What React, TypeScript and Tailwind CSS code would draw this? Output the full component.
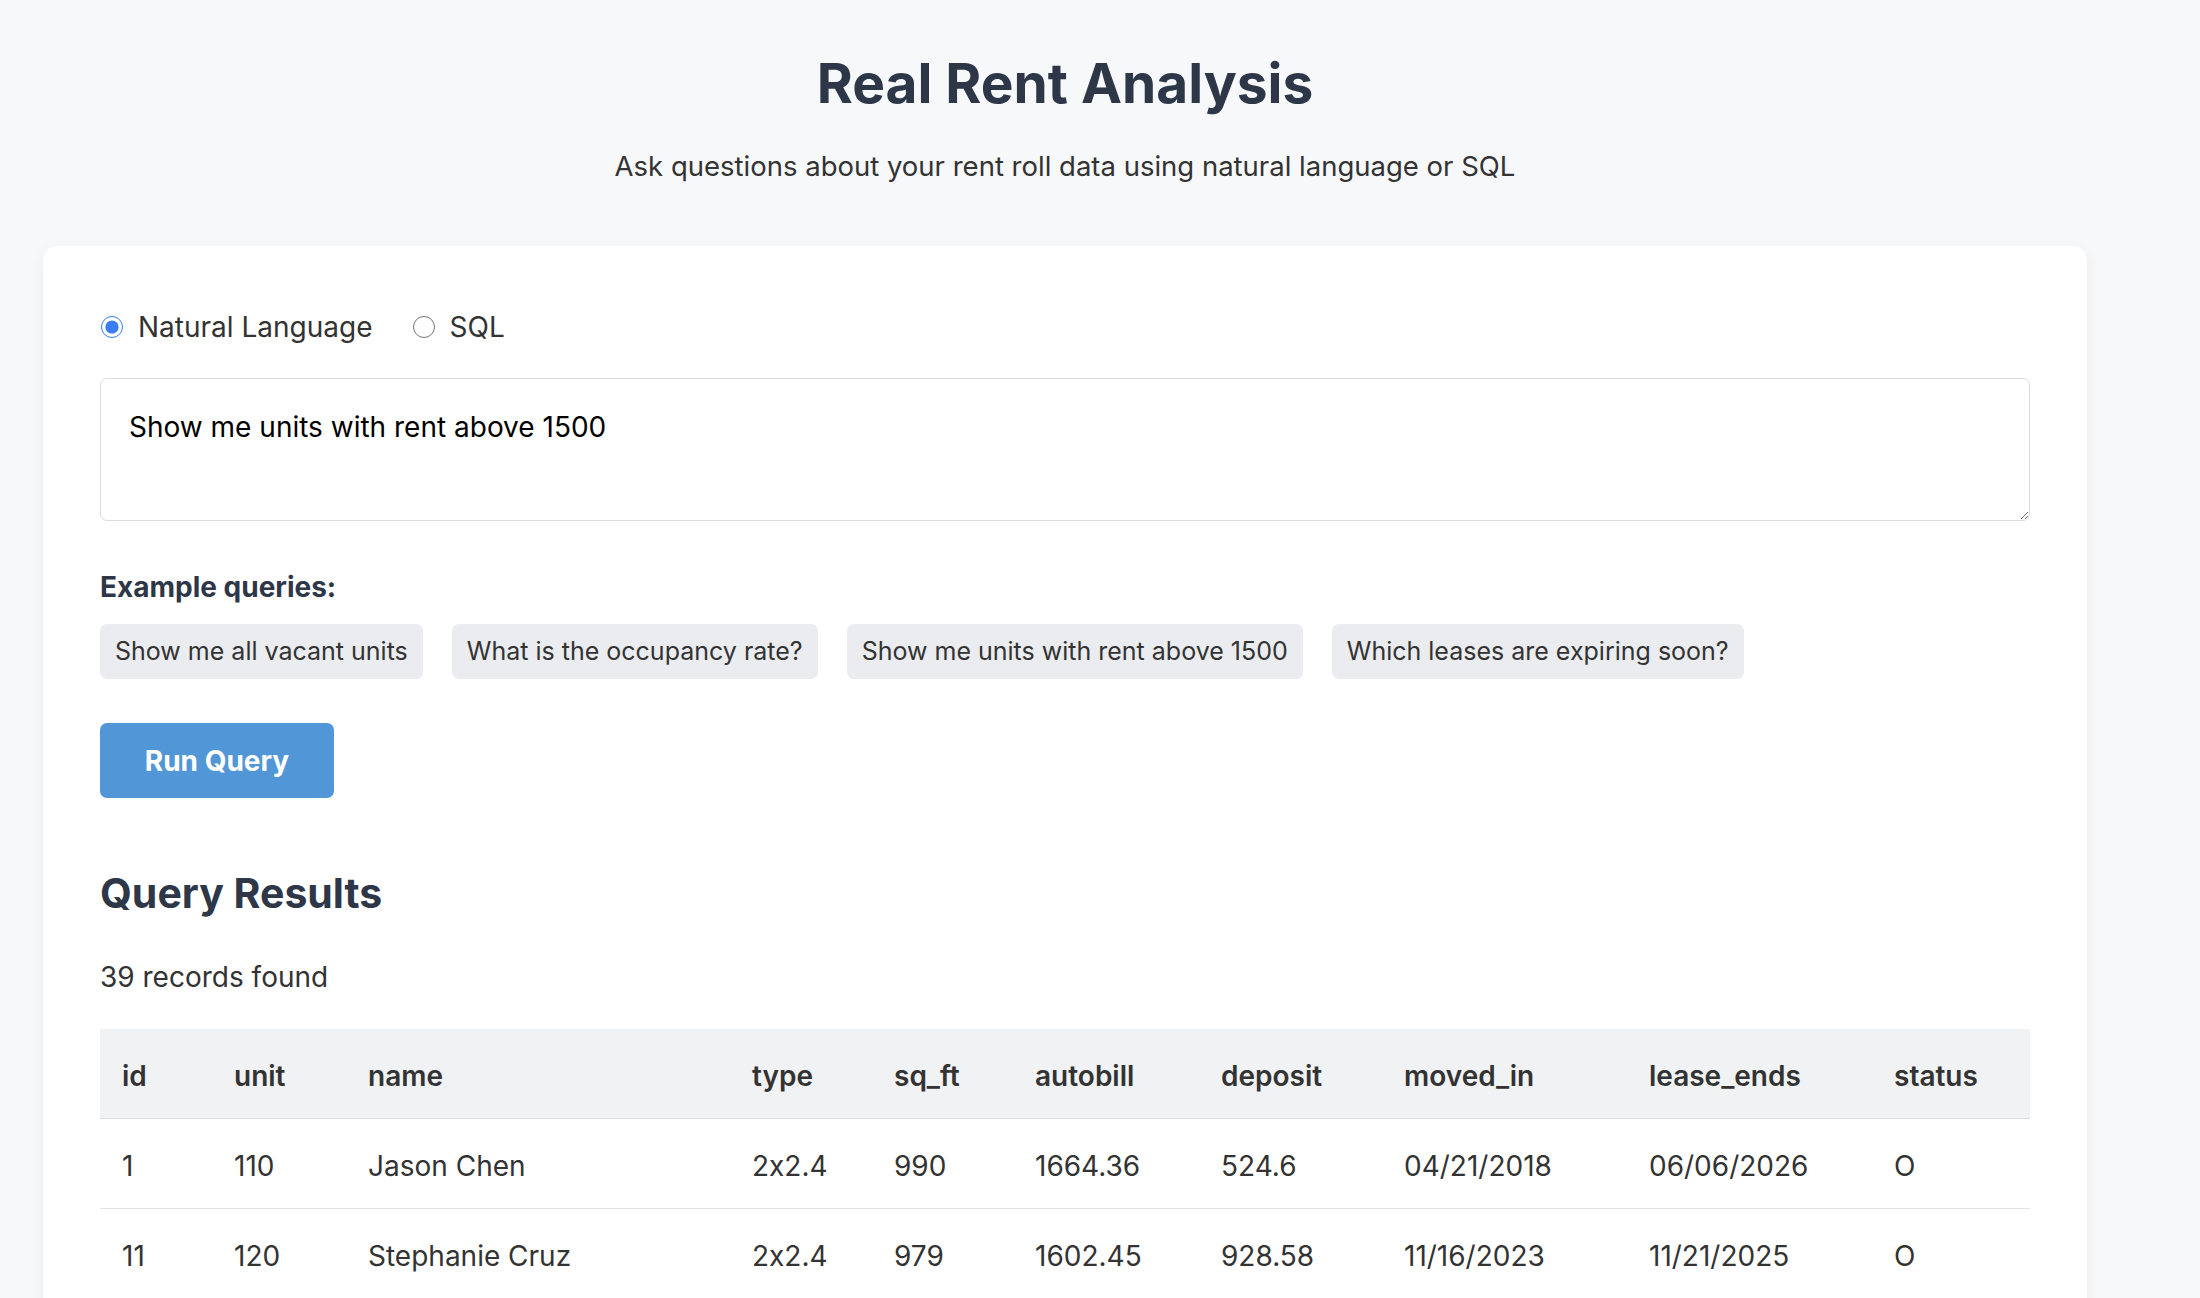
import { useState } from 'react'

const examples = [
  'Show me all vacant units',
  'What is the occupancy rate?',
  'Show me units with rent above 1500',
  'Which leases are expiring soon?',
]

const columns = [
  { key: 'id', width: 'w-[112px]' },
  { key: 'unit', width: 'w-[134px]' },
  { key: 'name', width: 'w-[384px]' },
  { key: 'type', width: 'w-[142px]' },
  { key: 'sq_ft', width: 'w-[141px]' },
  { key: 'autobill', width: 'w-[186px]' },
  { key: 'deposit', width: 'w-[183px]' },
  { key: 'moved_in', width: 'w-[245px]' },
  { key: 'lease_ends', width: 'w-[245px]' },
  { key: 'status', width: 'w-[158px]' },
]

const rows = [
  ['1', '110', 'Jason Chen', '2x2.4', '990', '1664.36', '524.6', '04/21/2018', '06/06/2026', 'O'],
  ['11', '120', 'Stephanie Cruz', '2x2.4', '979', '1602.45', '928.58', '11/16/2023', '11/21/2025', 'O'],
  ['14', '130', 'Marcus Webb', '2x2.4', '1012', '1588.9', '750', '02/03/2021', '01/31/2026', 'O'],
  ['19', '140', 'Priya Natarajan', '3x2', '1180', '1725.5', '1000', '08/15/2022', '08/14/2025', 'O'],
]

export default function App() {
  const [mode, setMode] = useState('nl')
  const [query, setQuery] = useState('Show me units with rent above 1500')

  return (
    <div className="min-h-screen bg-[#f7f8fa] font-['Inter',sans-serif] text-[#333] [font-feature-settings:'calt'_0]">
      <div className="ml-[43px] w-[2044px]">
        <header className="pt-[49px] text-center">
          <h1 className="text-[55px] leading-[68px] font-bold text-[#2d3748]">Real Rent Analysis</h1>
          <p className="mt-[29px] text-[27.5px] leading-[40px] text-[#333]">
            Ask questions about your rent roll data using natural language or SQL
          </p>
        </header>

        <main className="mt-[60px] rounded-[14px] bg-white px-[57px] pt-[61px] pb-[60px] shadow-[0_4px_14px_rgba(0,0,0,0.06)]">
          <div className="flex items-center text-[28px] leading-[40px]">
            <label className="flex items-center">
              <input
                type="radio"
                name="mode"
                checked={mode === 'nl'}
                onChange={() => setMode('nl')}
                className="ml-[1px] h-[22px] w-[22px] accent-[#3b7ef2]"
              />
              <span className="ml-[15px]">Natural Language</span>
            </label>
            <label className="ml-[40px] flex items-center">
              <input
                type="radio"
                name="mode"
                checked={mode === 'sql'}
                onChange={() => setMode('sql')}
                className="h-[22px] w-[22px] accent-[#3b7ef2]"
              />
              <span className="ml-[15px]">SQL</span>
            </label>
          </div>

          <textarea
            value={query}
            onChange={(e) => setQuery(e.target.value)}
            className="mt-[31px] block h-[143px] w-full rounded-[7px] border border-[#dcdcdc] p-[28px] text-[28px] leading-[40px] text-black outline-none"
          />

          <h3 className="mt-[46px] text-[28px] leading-[40px] font-bold text-[#2d3748]">Example queries:</h3>
          <div className="mt-[17px] flex gap-[29px]">
            {examples.map((ex) => (
              <button
                key={ex}
                onClick={() => setQuery(ex)}
                className="flex h-[55px] items-center rounded-[7px] bg-[#eaecef] px-[15px] text-[25px] text-[#333]"
              >
                {ex}
              </button>
            ))}
          </div>

          <button className="mt-[44px] h-[75px] w-[234px] rounded-[7px] bg-[#5196d6] text-[28px] font-bold text-white">
            Run Query
          </button>

          <h2 className="mt-[69px] text-[41px] leading-[52px] font-bold text-[#2d3748]">Query Results</h2>
          <p className="mt-[38px] text-[28px] leading-[40px]">39 records found</p>

          <table className="mt-[32px] w-full table-fixed border-collapse text-left text-[28px] leading-[40px]">
            <thead>
              <tr className="border-b border-[#dddddd] bg-[#f1f2f4]">
                {columns.map((c) => (
                  <th key={c.key} className={`${c.width} h-[89px] px-[22px] pt-[6px] font-semibold text-[#333]`}>
                    {c.key}
                  </th>
                ))}
              </tr>
            </thead>
            <tbody>
              {rows.map((r) => (
                <tr key={r[0]} className="border-b border-[#e3e3e3]">
                  {r.map((cell, i) => (
                    <td key={i} className="h-[90px] px-[22px] pt-[6px] text-[#333]">
                      {cell}
                    </td>
                  ))}
                </tr>
              ))}
            </tbody>
          </table>
        </main>
      </div>
    </div>
  )
}
